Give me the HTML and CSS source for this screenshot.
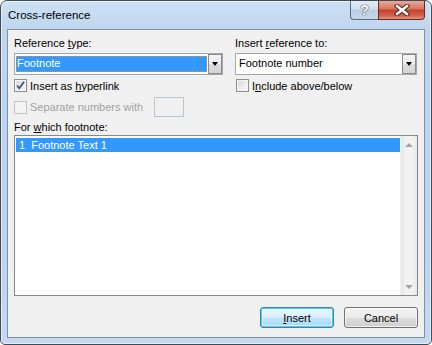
FILE: index.html
```html
<!DOCTYPE html>
<html lang="en">
<head>
  <meta charset="UTF-8" />
  <title>Cross-reference</title>
  <link rel="stylesheet" href="styles.css">
</head>
<body>

<div class="window">
  <div class="titlebar">
    <span class="title">Cross-reference</span>
    <div class="caption-btns">
      <span class="cap-btn help">?</span>
      <span class="cap-btn close">
        <svg width="16" height="12" viewBox="0 0 16 12">
          <path d="M3 2 L13 10 M13 2 L3 10" stroke="#4a2420" stroke-width="4.6" stroke-linecap="square"/>
          <path d="M3 2 L13 10 M13 2 L3 10" stroke="#fff" stroke-width="2.6" stroke-linecap="square"/>
        </svg>
      </span>
    </div>
  </div>

  <div class="client">
    <div class="top">
      <div class="col left">
        <div class="label">Reference <u>t</u>ype:</div>
        <div class="combo">
          <span class="value selected">Footnote</span>
          <span class="drop"><i class="tri"></i></span>
        </div>
        <div class="check first">
          <span class="box checked">
            <svg width="11" height="11" viewBox="0 0 11 11"><path d="M2 5.5 L4.3 8.3 L9 1.8" fill="none" stroke="#3d5185" stroke-width="1.8"/></svg>
          </span>
          <span>Insert as <u>h</u>yperlink</span>
        </div>
        <div class="check second disabled">
          <span class="box"></span>
          <span class="sep-text">Separate numbers with</span>
          <span class="num-box"></span>
        </div>
      </div>
      <div class="col right">
        <div class="label">Insert <u>r</u>eference to:</div>
        <div class="combo">
          <span class="value">Footnote number</span>
          <span class="drop"><i class="tri"></i></span>
        </div>
        <div class="check first shift">
          <span class="box"></span>
          <span>I<u>n</u>clude above/below</span>
        </div>
      </div>
    </div>

    <div class="label list-label">For <u>w</u>hich footnote:</div>
    <div class="list">
      <div class="rows">
        <div class="row sel">1&nbsp; Footnote Text 1</div>
      </div>
      <div class="scrollbar">
        <span class="sb-btn"><i class="arrow up"></i></span>
        <span class="sb-track"></span>
        <span class="sb-btn"><i class="arrow down"></i></span>
      </div>
    </div>

    <div class="buttons">
      <button class="btn default"><u>I</u>nsert</button>
      <button class="btn">Cancel</button>
    </div>
  </div>
</div>

</body>
</html>
```

FILE: styles.css
```css
body { margin: 0; padding: 0; background: #fff; font-family: "Liberation Sans", Arial, sans-serif; font-size: 11px; color: #000; }
u { text-decoration: underline; text-underline-offset: 1px; }

/* window frame */
.window {
  width: 432px; height: 345px; box-sizing: border-box;
  display: flex; flex-direction: column;
  padding: 0 6px 6px;
  border: 1px solid #3f4a57;
  border-radius: 7px 7px 5px 5px;
  background: linear-gradient(180deg, #cde0f5 0, #bfd6ee 28px, #bad2ec 60%, #c4d9f0 100%);
  box-shadow: inset 0 0 0 1px rgba(255,255,255,0.6);
}
.titlebar { display: flex; align-items: flex-start; height: 28px; }
.title { margin: 7px 0 0 1px; line-height: 15px; font-size: 11.5px; color: #000; }
.caption-btns { margin-left: auto; display: flex; }
.cap-btn {
  height: 19px; box-sizing: border-box; display: flex; align-items: center; justify-content: center;
  border: 1px solid #5e6b7c; border-top: none;
}
.help {
  width: 28px; border-radius: 0 0 0 4px; border-right: none;
  background: linear-gradient(180deg, #e4edf7 0, #d2dfee 45%, #bccde1 50%, #c8d8ea 100%);
  color: #fff; font-size: 14px; font-weight: bold;
  text-shadow: 0 0 1px #3d4a5a, 0 0 1px #3d4a5a, 0 0 1px #3d4a5a;
}
.close {
  width: 47px; border-radius: 0 0 4px 0;
  background: linear-gradient(180deg, #e7a99c 0, #d8735f 45%, #c4412d 50%, #d4604b 80%, #e49481 100%);
  border-color: #6a2a22;
}

/* client area */
.client {
  flex: 1; display: flex; flex-direction: column;
  background: #f0f0f0; border: 1px solid #7e91a6;
  padding: 6px 6px 0;
}
.label { line-height: 15px; height: 15px; }
.top { display: flex; gap: 12px; }
.col.left { width: 209px; }
.col.right { width: 182px; }

.combo {
  margin-top: 2px; height: 22px; box-sizing: border-box;
  display: flex; align-items: stretch;
  border: 1px solid #a3a6ad; background: #fff;
}
.value { flex: 1; line-height: 14px; margin: 2px 1px 2px 2px; padding-left: 1px; }
.col.right .value { margin-left: 2px; padding-left: 1px; line-height: 18px; margin-top: 0; margin-bottom: 0; }
.value.selected {
  margin-left: 1px; background: #3399ff; color: #fff;
  outline: 1px dotted #d9924a; outline-offset: -1px;
}
.drop {
  width: 14px; box-sizing: border-box;
  border: 1px solid #8a8a8a;
  background: linear-gradient(180deg, #f4f4f4 0, #ececec 50%, #dedede 51%, #d4d4d4 100%);
  display: flex; align-items: center; justify-content: center;
}
.tri { width: 0; height: 0; border-left: 3.5px solid transparent; border-right: 3.5px solid transparent; border-top: 4px solid #000; }

/* checkboxes */
.check { display: flex; align-items: center; gap: 3px; }
.check.first { margin-top: 3px; height: 15px; }
.check.second { margin-top: 4px; height: 20px; }
.check.shift { padding-left: 1px; }
.sep-text { width: 121px; }
.box {
  width: 13px; height: 13px; box-sizing: border-box;
  border: 1px solid #8e8f8f;
  background: linear-gradient(135deg, #d6d6d6 0, #eeeeee 60%, #fafafa 100%);
  box-shadow: inset 0 0 0 1px #f4f4f4;
  display: flex; align-items: center; justify-content: center;
}
.box svg { display: block; }
.disabled { color: #a0a0a0; }
.disabled .box { border-color: #c3c3c3; background: #f4f4f4; box-shadow: none; }
.num-box {
  width: 30px; height: 20px; box-sizing: border-box;
  border: 1px solid #b9c6d4; background: #f0f0f0;
}

/* list */
.list-label { margin-top: 3px; }
.list {
  height: 161px; box-sizing: border-box; display: flex;
  border: 1px solid #828790; background: #fff;
}
.rows { flex: 1; padding: 2px 0 0 1px; }
.row { height: 14px; line-height: 14px; padding-left: 3px; }
.row.sel { background: #3399ff; color: #fff; }
.scrollbar {
  width: 16px; display: flex; flex-direction: column;
  background: linear-gradient(90deg, #e6e6e6 0, #f2f2f2 30%, #f2f2f2 70%, #e8e8e8 100%);
  border-left: 1px solid #f4f4f4;
}
.sb-btn { height: 17px; display: flex; align-items: center; justify-content: center; }
.sb-track { flex: 1; }
.arrow { width: 0; height: 0; border-left: 4px solid transparent; border-right: 4px solid transparent; }
.arrow.up { border-bottom: 4px solid #a3a3a3; }
.arrow.down { border-top: 4px solid #a3a3a3; }

/* dialog buttons */
.buttons { display: flex; justify-content: flex-end; gap: 10px; margin-top: 11px; }
.btn {
  width: 74px; height: 21px; box-sizing: border-box; padding: 0;
  font-family: inherit; font-size: 11px; color: #000;
  border: 1px solid #707070; border-radius: 3px;
  background: linear-gradient(180deg, #f2f2f2 0, #ebebeb 50%, #dddddd 51%, #cfcfcf 100%);
  box-shadow: inset 0 0 0 1px rgba(255,255,255,0.7);
}
.btn.default {
  border-color: #3c7fb1;
  box-shadow: inset 0 0 0 1px #48d2f7, inset 0 0 0 2px rgba(255,255,255,0.5);
  background: linear-gradient(180deg, #eaf6fd 0, #d9f0fc 50%, #bee6fd 51%, #a7d9f5 100%);
}
```
